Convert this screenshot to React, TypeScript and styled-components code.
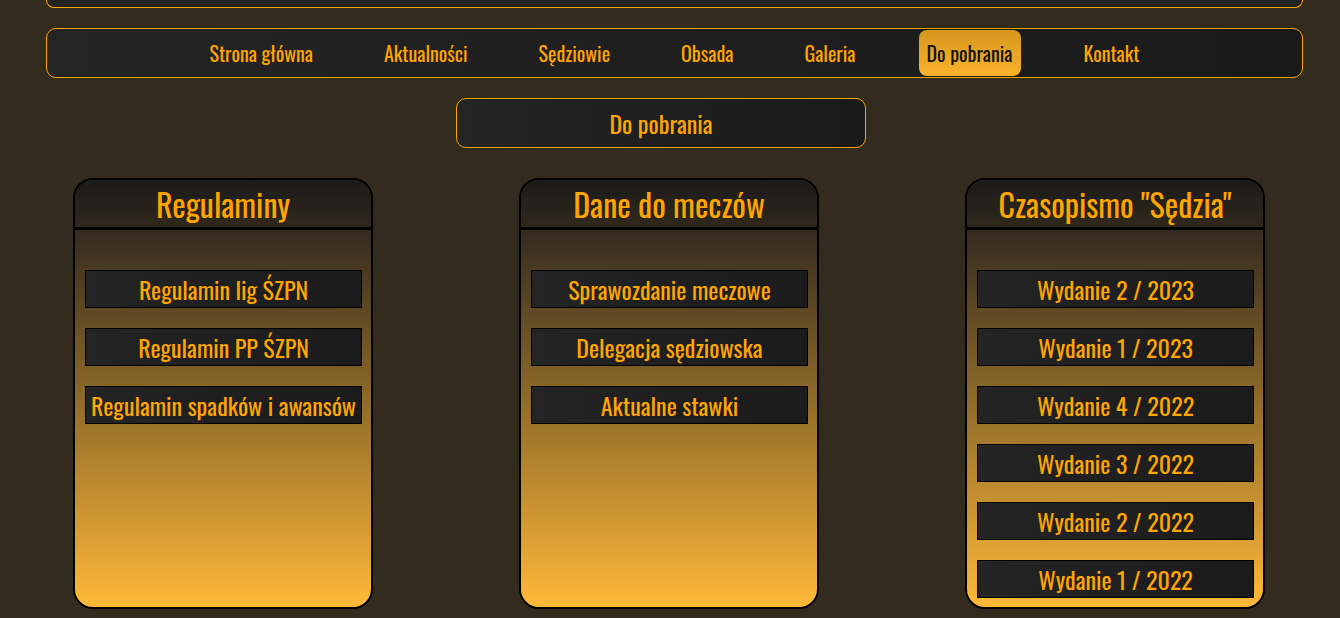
import React from 'react';
import styled, { createGlobalStyle } from 'styled-components';

const GlobalStyle = createGlobalStyle`
  body {
    margin: 0;
    background-color: #342b1f;
    font-family: "Oswald", "Liberation Sans Narrow", "DejaVu Sans Condensed", "Roboto Condensed", "Liberation Sans", sans-serif;
  }
`;

const Page = styled.div`
  min-height: 618px;
  padding-bottom: 20px;
`;

const TopStrip = styled.div`
  margin: 0 37px 0 46px;
  height: 7px;
  background: #232323;
  border: 1px solid #ffa500;
  border-top: none;
  border-radius: 0 0 10px 10px;
`;

const Nav = styled.nav`
  margin: 20px 37px 0 46px;
  height: 50px;
  box-sizing: border-box;
  border: 1px solid #ffa500;
  border-radius: 10px;
  background: linear-gradient(to right, #242424, #1a1a1a);
  display: flex;
  justify-content: center;
  align-items: center;
  gap: 55px;
`;

const NavItem = styled.a<{ $active?: boolean }>`
  height: 46px;
  line-height: 46px;
  padding: 0 8px;
  border-radius: 8px;
  font-size: 20px;
  font-weight: 400;
  text-decoration: none;
  cursor: pointer;
  color: ${p => (p.$active ? '#111' : '#ffa500')};
  background: ${p => (p.$active ? 'linear-gradient(to bottom, #d6971f, #fbb22a)' : 'transparent')};
`;

const PageTitle = styled.h1`
  margin: 20px 0 0 456px;
  width: 410px;
  height: 50px;
  box-sizing: border-box;
  border: 1px solid #ffa500;
  border-radius: 10px;
  background: linear-gradient(to right, #242424, #1a1a1a);
  color: #ffa500;
  font-size: 24px;
  font-weight: 400;
  line-height: 48px;
  text-align: center;
`;

const Cards = styled.div`
  margin-top: 30px;
  padding: 0 2px 0 0;
  display: flex;
  justify-content: space-around;
  align-items: stretch;
`;

const Card = styled.section`
  width: 300px;
  box-sizing: border-box;
  border: 2px solid #000;
  border-radius: 20px;
  overflow: hidden;
  display: flex;
  flex-direction: column;
`;

const CardHeader = styled.h2`
  margin: 0;
  height: 47px;
  border-bottom: 3px solid #000;
  background: linear-gradient(to bottom, #1b1b1b, #30281b);
  color: #ffa500;
  font-size: 32px;
  font-weight: 400;
  line-height: 47px;
  text-align: center;
`;

const CardBody = styled.div`
  flex: 1;
  padding: 40px 9px 9px 10px;
  background: linear-gradient(to bottom, #342a1e, #ffb938);
  display: flex;
  flex-direction: column;
  gap: 20px;
`;

const LinkButton = styled.a`
  display: block;
  height: 38px;
  box-sizing: border-box;
  border: 1px solid #000;
  background: linear-gradient(to right, #242424, #1b1b1b);
  color: #ffa500;
  font-size: 24px;
  font-weight: 400;
  line-height: 36px;
  text-align: center;
  white-space: nowrap;
  text-decoration: none;
  cursor: pointer;
`;

const navItems = ['Strona główna', 'Aktualności', 'Sędziowie', 'Obsada', 'Galeria', 'Do pobrania', 'Kontakt'];

const sections = [
  {
    title: 'Regulaminy',
    links: ['Regulamin lig ŚZPN', 'Regulamin PP ŚZPN', 'Regulamin spadków i awansów'],
  },
  {
    title: 'Dane do meczów',
    links: ['Sprawozdanie meczowe', 'Delegacja sędziowska', 'Aktualne stawki'],
  },
  {
    title: 'Czasopismo "Sędzia"',
    links: ['Wydanie 2 / 2023', 'Wydanie 1 / 2023', 'Wydanie 4 / 2022', 'Wydanie 3 / 2022', 'Wydanie 2 / 2022', 'Wydanie 1 / 2022'],
  },
];

const App: React.FC = () => {
  return (
    <Page>
      <GlobalStyle />
      <TopStrip />
      <Nav>
        {navItems.map(item => (
          <NavItem key={item} $active={item === 'Do pobrania'}>
            {item}
          </NavItem>
        ))}
      </Nav>

      <PageTitle>Do pobrania</PageTitle>

      <Cards>
        {sections.map(section => (
          <Card key={section.title}>
            <CardHeader>{section.title}</CardHeader>
            <CardBody>
              {section.links.map(link => (
                <LinkButton key={link}>{link}</LinkButton>
              ))}
            </CardBody>
          </Card>
        ))}
      </Cards>
    </Page>
  );
};

export default App;
